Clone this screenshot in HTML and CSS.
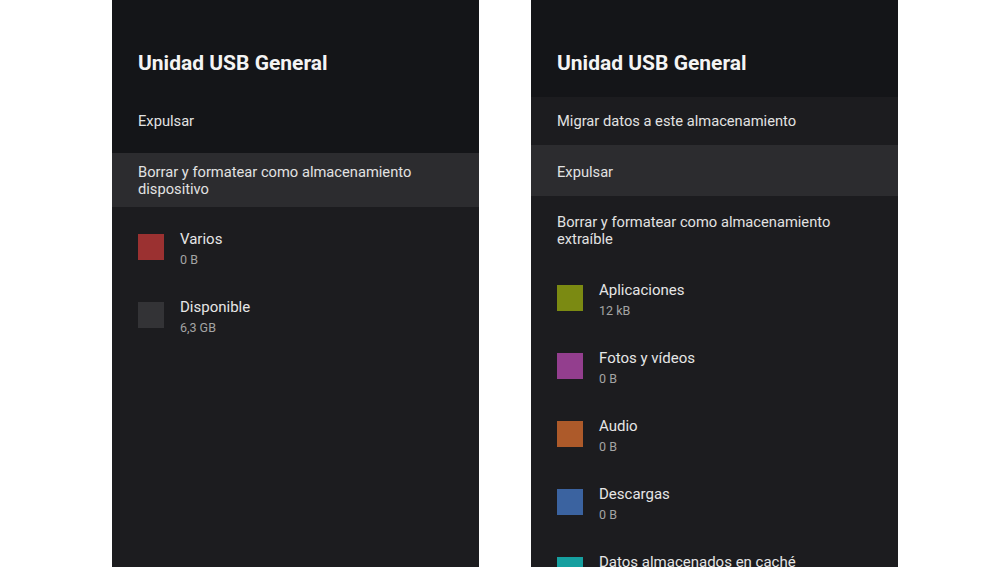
FILE: index.html
```html
<!DOCTYPE html>
<html lang="es">
<head>
<meta charset="utf-8">
<title>Unidad USB General</title>
<link rel="stylesheet" href="styles.css">
</head>
<body>
<main class="stage">
  <section class="panel">
    <header class="panel-head panel-head--tall">
      <h1 class="panel-title">Unidad USB General</h1>
      <div class="row row--plain row--first-left">Expulsar</div>
    </header>
    <div class="row row--focus row--two-left">Borrar y formatear como almacenamiento dispositivo</div>
    <ul class="items">
      <li class="item"><span class="swatch swatch--misc"></span><div class="item-text"><div class="item-name">Varios</div><div class="item-size">0 B</div></div></li>
      <li class="item"><span class="swatch swatch--free"></span><div class="item-text"><div class="item-name">Disponible</div><div class="item-size">6,3 GB</div></div></li>
    </ul>
  </section>

  <section class="panel">
    <header class="panel-head">
      <h1 class="panel-title">Unidad USB General</h1>
    </header>
    <div class="row row--single">Migrar datos a este almacenamiento</div>
    <div class="row row--focus row--single-focus">Expulsar</div>
    <div class="row row--two-right">Borrar y formatear como almacenamiento extraíble</div>
    <ul class="items">
      <li class="item"><span class="swatch swatch--apps"></span><div class="item-text"><div class="item-name">Aplicaciones</div><div class="item-size">12 kB</div></div></li>
      <li class="item"><span class="swatch swatch--photos"></span><div class="item-text"><div class="item-name">Fotos y vídeos</div><div class="item-size">0 B</div></div></li>
      <li class="item"><span class="swatch swatch--audio"></span><div class="item-text"><div class="item-name">Audio</div><div class="item-size">0 B</div></div></li>
      <li class="item"><span class="swatch swatch--downloads"></span><div class="item-text"><div class="item-name">Descargas</div><div class="item-size">0 B</div></div></li>
      <li class="item"><span class="swatch swatch--cache"></span><div class="item-text"><div class="item-name">Datos almacenados en caché</div><div class="item-size">0 B</div></div></li>
    </ul>
  </section>
</main>
</body>
</html>
```

FILE: styles.css
```css
* { box-sizing: border-box; }

html, body {
  margin: 0;
  padding: 0;
  background: #ffffff;
}

body {
  font-family: Roboto, "Noto Sans", "Liberation Sans", sans-serif;
  color: #e4e4e4;
}

.stage {
  display: flex;
  gap: 52px;
  padding-left: 112px;
  height: 567px;
  overflow: hidden;
}

.panel {
  width: 367px;
  height: 567px;
  overflow: hidden;
  background: #1c1c1f;
}

.panel-head {
  background: #141518;
  height: 97px;
  padding: 49px 26px 0;
}

.panel-head--tall {
  height: 153px;
  padding: 49px 0 0;
}

.panel-head--tall .panel-title {
  padding: 0 26px;
}

.panel-title {
  margin: 0;
  font-size: 21px;
  line-height: 28px;
  font-weight: 700;
  color: #f4f4f4;
  letter-spacing: 0;
}

.row {
  padding: 0 26px;
  font-size: 14.7px;
  line-height: 20px;
  color: #e2e2e2;
}

.row--first-left {
  padding-top: 34px;
}

.row--focus {
  background: #2c2c2f;
}

.row--two-left {
  padding-top: 11px;
  padding-bottom: 9px;
  line-height: 17px;
  padding-right: 60px;
}

.row--single {
  padding-top: 14px;
  padding-bottom: 14px;
}

.row--single-focus {
  padding-top: 17px;
  padding-bottom: 14px;
}

.row--two-right {
  padding-top: 18px;
  padding-bottom: 10px;
  line-height: 17px;
  padding-right: 60px;
}

.items {
  list-style: none;
  margin: 0;
  padding: 0;
}

.item {
  display: flex;
  align-items: flex-start;
  gap: 16px;
  height: 68px;
  padding: 24px 26px 0;
}

.swatch {
  flex: none;
  width: 26px;
  height: 26px;
  margin-top: 3px;
}

.swatch--misc { background: #9b3131; }
.swatch--free { background: #333336; }
.swatch--apps { background: #7b8a12; }
.swatch--photos { background: #933e8e; }
.swatch--audio { background: #ad5a2a; }
.swatch--downloads { background: #3b63a0; }
.swatch--cache { background: #16a0a0; }

.item-name {
  font-size: 15px;
  line-height: 17px;
  color: #e6e6e6;
}

.item-size {
  margin-top: 4px;
  font-size: 12.5px;
  line-height: 16px;
  color: #a4a4a4;
}
```
